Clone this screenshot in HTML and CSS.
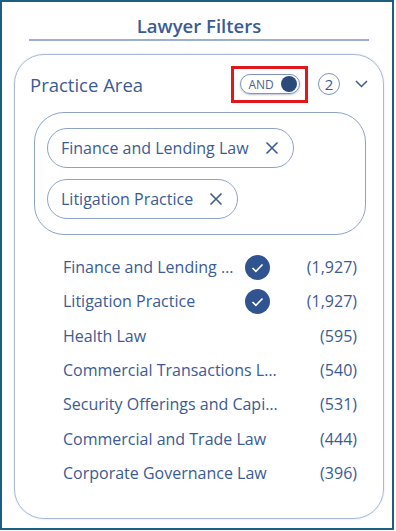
FILE: index.html
```html
<!DOCTYPE html>
<html lang="en">
<head>
  <meta charset="UTF-8" />
  <title>Lawyer Filters</title>
  <link rel="stylesheet" href="styles.css">
</head>
<body>
  <div class="frame">
    <h2 class="title">Lawyer Filters</h2>

    <div class="card">
      <div class="card-head">
        <span class="card-title">Practice Area</span>
        <div class="toggle-wrap">
          <div class="toggle">
            <span>AND</span>
            <span class="knob"></span>
          </div>
        </div>
        <span class="count-badge">2</span>
        <svg class="chevron" width="13" height="8" viewBox="0 0 13 8">
          <path d="M1 1l5.5 5.5L12 1" fill="none" stroke="#3b5b95" stroke-width="1.5"/>
        </svg>
      </div>

      <div class="chips">
        <div class="chip">Finance and Lending Law
          <svg class="chip-x" width="14" height="14" viewBox="0 0 14 14">
            <path d="M1.5 1.5l11 11M12.5 1.5l-11 11" stroke="#3b5b95" stroke-width="1.6"/>
          </svg>
        </div>
        <div class="chip">Litigation Practice
          <svg class="chip-x" width="14" height="14" viewBox="0 0 14 14">
            <path d="M1.5 1.5l11 11M12.5 1.5l-11 11" stroke="#3b5b95" stroke-width="1.6"/>
          </svg>
        </div>
      </div>

      <ul class="options">
        <li class="option">
          <span class="name">Finance and Lending Law Practice</span>
          <span class="check"><svg width="25" height="25" viewBox="0 0 25 25"><circle cx="12.5" cy="12.5" r="12.5" fill="#2f5490"/><path d="M7.5 13l3.4 3.4L17.5 9.5" fill="none" stroke="#fff" stroke-width="1.6"/></svg></span>
          <span class="num">(1,927)</span>
        </li>
        <li class="option">
          <span class="name">Litigation Practice</span>
          <span class="check"><svg width="25" height="25" viewBox="0 0 25 25"><circle cx="12.5" cy="12.5" r="12.5" fill="#2f5490"/><path d="M7.5 13l3.4 3.4L17.5 9.5" fill="none" stroke="#fff" stroke-width="1.6"/></svg></span>
          <span class="num">(1,927)</span>
        </li>
        <li class="option">
          <span class="name">Health Law</span>
          <span class="num">(595)</span>
        </li>
        <li class="option">
          <span class="name">Commercial Transactions Law</span>
          <span class="num">(540)</span>
        </li>
        <li class="option">
          <span class="name">Security Offerings and Capital Markets</span>
          <span class="num">(531)</span>
        </li>
        <li class="option">
          <span class="name">Commercial and Trade Law</span>
          <span class="num">(444)</span>
        </li>
        <li class="option">
          <span class="name">Corporate Governance Law</span>
          <span class="num">(396)</span>
        </li>
      </ul>
    </div>
  </div>
</body>
</html>
```

FILE: styles.css
```css
body {
  margin: 0;
  background: #fff;
  font-family: 'Open Sans', 'Noto Sans', sans-serif;
  color: #3b5b95;
}
.frame {
  box-sizing: border-box;
  width: 394px;
  height: 530px;
  border: 2px solid #1d5f83;
  padding-top: 10px;
}
.title {
  margin: 0 0 0 27px;
  width: 340px;
  height: 29px;
  box-sizing: border-box;
  border-bottom: 2px solid #9aafd2;
  text-align: center;
  font-size: 18.5px;
  font-weight: 600;
  line-height: 27px;
}
.card {
  box-sizing: border-box;
  margin: 13px 0 0 12px;
  width: 370px;
  height: 465px;
  border: 1px solid #a7b8d8;
  border-radius: 30px;
  box-shadow: 0 0 2px rgba(90, 110, 160, 0.25);
  padding: 17px 0 0 0;
}
.card-head {
  display: flex;
  align-items: center;
  height: 24px;
  padding-left: 15px;
}
.card-title {
  font-size: 18.5px;
  flex: 1;
}
.toggle-wrap {
  border: 3px solid #e0171d;
  width: 71px;
  height: 31px;
  display: flex;
  align-items: center;
  justify-content: center;
  margin-right: 10px;
}
.toggle {
  box-sizing: border-box;
  width: 60px;
  height: 20px;
  border: 1px solid #7f93b7;
  border-radius: 10px;
  box-shadow: 0 1px 2px rgba(60, 80, 120, 0.35);
  display: flex;
  align-items: center;
  justify-content: space-between;
  padding: 0 2px 0 8px;
  font-size: 12px;
  color: #4f6288;
}
.knob {
  width: 16px;
  height: 16px;
  border-radius: 50%;
  background: #2b4a79;
}
.count-badge {
  box-sizing: border-box;
  width: 22px;
  height: 22px;
  border: 1px solid #7f93b7;
  border-radius: 50%;
  display: flex;
  align-items: center;
  justify-content: center;
  font-size: 15px;
  margin-right: 15px;
}
.chevron {
  margin-right: 15px;
}
.chips {
  box-sizing: border-box;
  margin: 16px 0 0 19px;
  width: 332px;
  height: 123px;
  border: 1px solid #8fa3c8;
  border-radius: 30px;
  padding: 15px 12px;
  display: flex;
  flex-direction: column;
  align-items: flex-start;
  gap: 11px;
}
.chip {
  box-sizing: border-box;
  height: 40px;
  border: 1px solid #8fa3c8;
  border-radius: 20px;
  padding: 0 14px 0 13px;
  display: flex;
  align-items: center;
  gap: 16px;
  font-size: 16px;
}
.options {
  list-style: none;
  margin: 15px 0 0 0;
  padding: 0 26px 0 48px;
}
.option {
  display: flex;
  align-items: center;
  height: 34.3px;
  font-size: 16px;
}
.name {
  flex: 1;
  min-width: 0;
  white-space: nowrap;
  overflow: hidden;
  text-overflow: ellipsis;
}
.check {
  width: 25px;
  height: 25px;
  margin: 0 17px 0 5px;
}
.check + .num {
  width: 70px;
}
.num {
  width: 75px;
  text-align: right;
}
```
